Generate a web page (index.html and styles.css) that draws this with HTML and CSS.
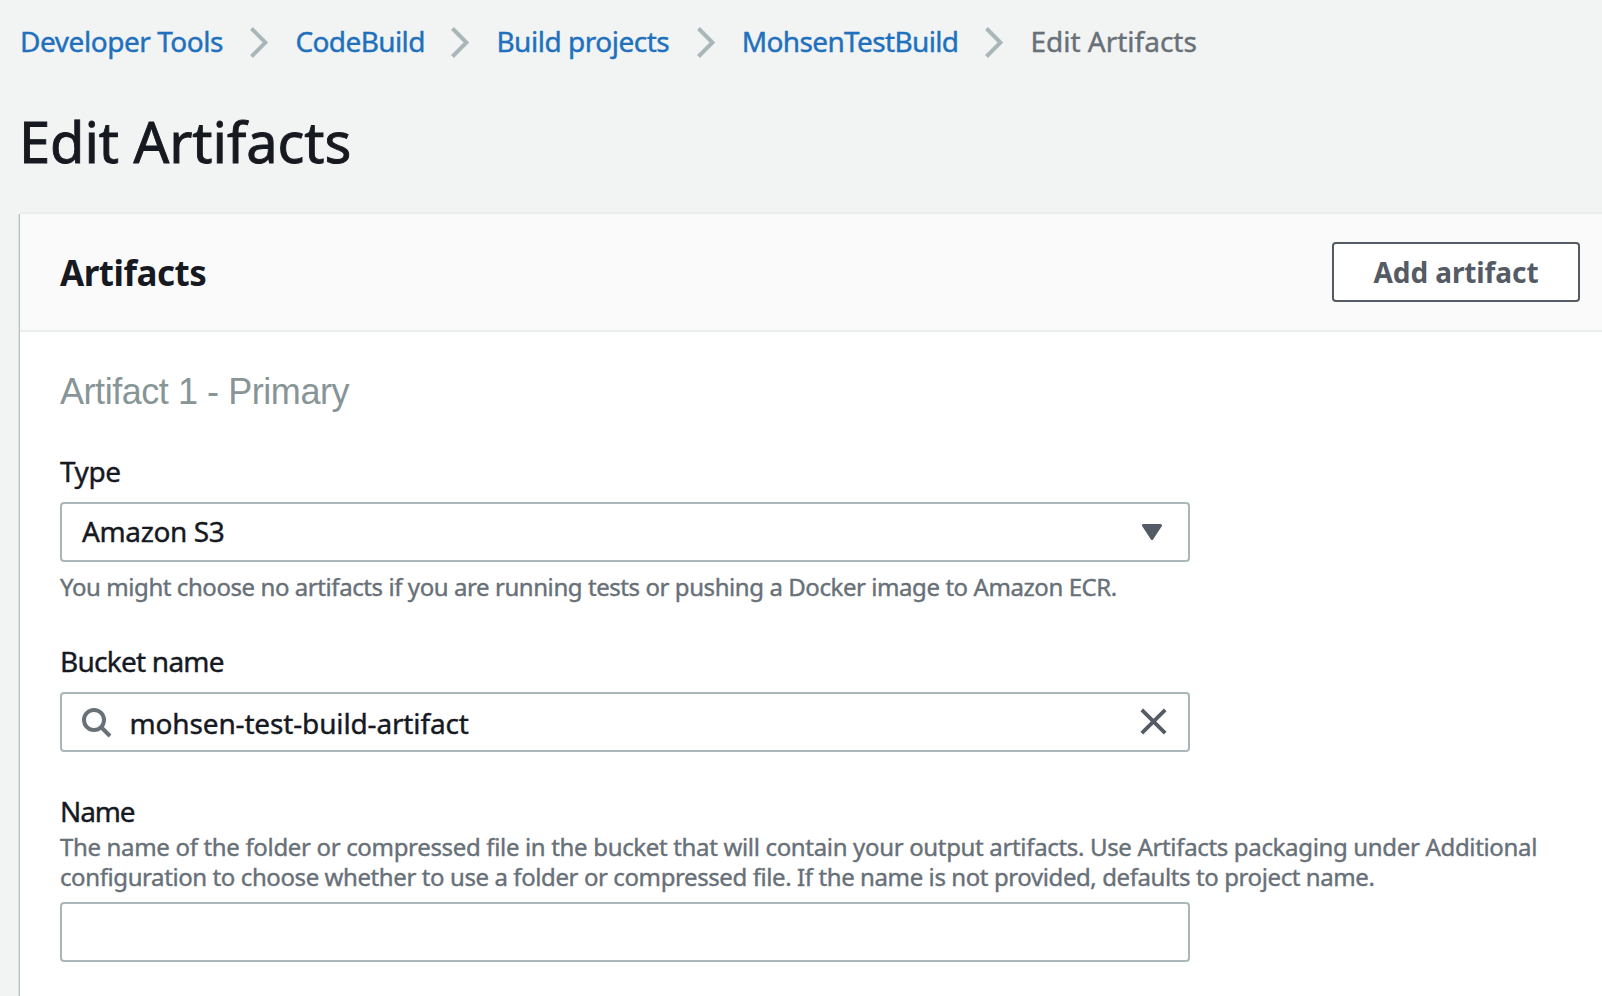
FILE: index.html
```html
<!DOCTYPE html>
<html lang="en">
<head>
<meta charset="utf-8">
<title>Edit Artifacts</title>
<link rel="stylesheet" href="styles.css">
</head>
<body>
<nav class="breadcrumb">
  <a class="crumb crumb-tools">Developer Tools</a>
  <svg class="chevron" viewBox="0 0 18 31"><path d="M1.5 1.5 15.5 15.5 1.5 29.5"/></svg>
  <a class="crumb crumb-service">CodeBuild</a>
  <svg class="chevron" viewBox="0 0 18 31"><path d="M1.5 1.5 15.5 15.5 1.5 29.5"/></svg>
  <a class="crumb crumb-projects">Build projects</a>
  <svg class="chevron" viewBox="0 0 18 31"><path d="M1.5 1.5 15.5 15.5 1.5 29.5"/></svg>
  <a class="crumb crumb-project">MohsenTestBuild</a>
  <svg class="chevron" viewBox="0 0 18 31"><path d="M1.5 1.5 15.5 15.5 1.5 29.5"/></svg>
  <span class="crumb crumb-current">Edit Artifacts</span>
</nav>
<h1 class="title">Edit Artifacts</h1>
<section class="panel">
  <header class="panel-header">
    <h2 class="heading">Artifacts</h2>
    <button class="button">Add artifact</button>
  </header>
  <div class="panel-body">
    <h3 class="subheading">Artifact 1 - Primary</h3>
    <div class="field">
      <div class="label label-type">Type</div>
      <div class="control select">
        <span class="select-value">Amazon S3</span>
        <svg class="caret" viewBox="0 0 20 16"><path d="M1.5 1.5h17L10 14.5z"/></svg>
      </div>
      <div class="help help-type">You might choose no artifacts if you are running tests or pushing a Docker image to Amazon ECR.</div>
    </div>
    <div class="field">
      <div class="label label-bucket">Bucket name</div>
      <div class="control search">
        <svg class="search-icon" viewBox="0 0 30 30"><circle cx="12" cy="12" r="10"/><path d="M19 19l9 9"/></svg>
        <span class="search-value">mohsen-test-build-artifact</span>
        <svg class="clear" viewBox="0 0 27 27"><path d="M1.8 1.8l23.4 23.4M25.2 1.8L1.8 25.2"/></svg>
      </div>
    </div>
    <div class="field">
      <div class="label label-name">Name</div>
      <div class="help help-name"><span class="help-first">The name of the folder or compressed file in the bucket that will contain your output artifacts. Use Artifacts packaging under Additional</span><br><span class="help-second">configuration to choose whether to use a folder or compressed file. If the name is not provided, defaults to project name.</span></div>
      <div class="control"></div>
    </div>
  </div>
</section>
</body>
</html>
```
FILE: styles.css
```css
* { box-sizing: border-box; }

body {
  margin: 0;
  height: 996px;
  overflow: hidden;
  display: flex;
  flex-direction: column;
  background: #f2f3f3;
  color: #16191f;
  font: 400 28px/40px "Noto Sans", sans-serif;
  -webkit-text-stroke: 0.4px currentColor;
}

.breadcrumb {
  display: flex;
  align-items: center;
  padding: 21px 0 0 20px;
}
.crumb { color: #2070bd; white-space: nowrap; flex: none; }
.crumb-tools { width: 205.4px; letter-spacing: -0.45px; }
.crumb-service { width: 131px; letter-spacing: -0.6px; }
.crumb-projects { width: 175.4px; letter-spacing: -0.48px; }
.crumb-project { width: 218.6px; letter-spacing: -0.64px; }
.crumb-current { color: #687078; }

.chevron {
  flex: none;
  width: 18px;
  height: 31px;
  margin: 2px 27px 0 25px;
  fill: none;
  stroke: #aab7b8;
  stroke-width: 4;
}

.title {
  margin: 45px 0 0 19px;
  font-size: 56px;
  line-height: 70px;
  font-weight: 400;
  letter-spacing: -0.05px;
  -webkit-text-stroke-width: 0.9px;
}

.panel {
  flex: 1;
  margin: 36px 0 0 20px;
  background: #fff;
  box-shadow: -1px 2px 0 #b9c0c2, -2px 2px 0 #dfe3e3;
}
.panel-header {
  display: flex;
  align-items: center;
  justify-content: space-between;
  height: 120px;
  padding: 0 22px 0 40px;
  background: #fafafa;
  border-top: 2px solid #eaeded;
  border-bottom: 2px solid #eaeded;
}
.heading {
  margin: 2px 0 0;
  font-size: 35px;
  line-height: 44px;
  letter-spacing: -0.5px;
  -webkit-text-stroke-width: 0;
}
.button {
  width: 248px;
  height: 60px;
  padding: 0;
  border: 2px solid #545b64;
  border-radius: 4px;
  background: #fff;
  color: #545b64;
  font: 700 28px/40px "Noto Sans", sans-serif;
  letter-spacing: -0.1px;
  -webkit-text-stroke-width: 0;
}

.panel-body { padding: 38px 40px 0; }
.subheading {
  margin: 0 0 37px;
  color: #879596;
  font: 400 36px/44px "Liberation Sans", Arial, sans-serif;
  letter-spacing: -0.45px;
  -webkit-text-stroke-width: 0;
}

.field { margin-bottom: 39px; }
.label { height: 40px; }
.label-type { letter-spacing: -0.4px; }
.label-bucket { letter-spacing: -0.75px; }
.label-name { letter-spacing: -1.1px; }

.control {
  display: flex;
  align-items: center;
  width: 1130px;
  height: 60px;
  border: 2px solid #aab7b8;
  border-radius: 4px;
  background: #fff;
}
.label + .control { margin-top: 11px; }

.select { justify-content: space-between; padding: 0 26px 2px 20px; }
.select-value { letter-spacing: -0.38px; }
.caret {
  width: 20px;
  height: 16px;
  margin-top: 2px;
  fill: #545b64;
  stroke: #545b64;
  stroke-width: 3;
  stroke-linejoin: round;
}

.search { padding: 2px 21px 0 20px; }
.search-icon {
  width: 30px;
  height: 30px;
  margin-right: 17.5px;
  fill: none;
  stroke: #687078;
  stroke-width: 4;
}
.search-value { flex: 1; letter-spacing: -0.15px; }
.clear {
  width: 27px;
  height: 27px;
  margin-top: -3px;
  fill: none;
  stroke: #545b64;
  stroke-width: 3.8;
}

.help {
  color: #687078;
  font-size: 24px;
  line-height: 30px;
  white-space: nowrap;
}
.help-type { margin-top: 10px; letter-spacing: -0.427px; }
.help-name { margin: 1px 0 10px; }
.help-first { letter-spacing: -0.333px; }
.help-second { letter-spacing: -0.406px; }
```
